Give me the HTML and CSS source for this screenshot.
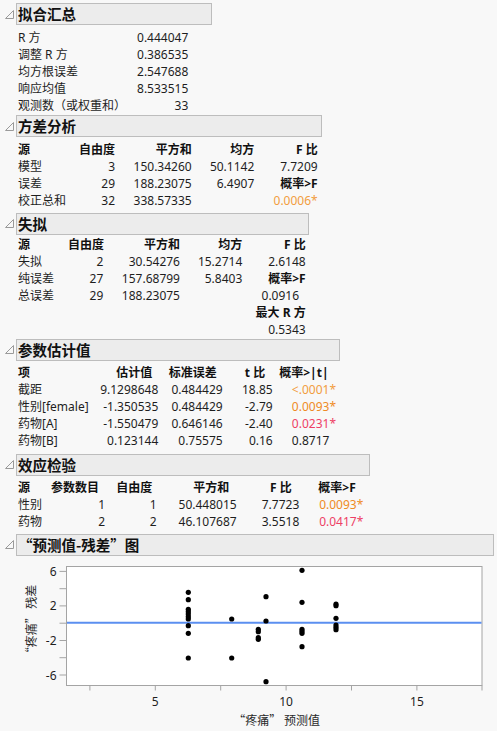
FILE: index.html
```html
<!DOCTYPE html>
<html lang="zh-CN">
<head>
<meta charset="utf-8">
<title>拟合汇总</title>
<link rel="stylesheet" href="styles.css">
</head>
<body>

<section class="section">
  <div class="head">
    <svg class="tri" viewBox="0 0 9 9"><polygon points="8.5,0.5 8.5,8.5 0.5,8.5"/></svg>
    <div class="bar w1">拟合汇总</div>
  </div>
  <table class="t t1">
    <colgroup><col class="c100"><col class="c70"></colgroup>
    <tr><td class="l">R 方</td><td>0.444047</td></tr>
    <tr><td class="l">调整 R 方</td><td>0.386535</td></tr>
    <tr><td class="l">均方根误差</td><td>2.547688</td></tr>
    <tr><td class="l">响应均值</td><td>8.533515</td></tr>
    <tr><td class="l">观测数（或权重和）</td><td>33</td></tr>
  </table>
</section>

<section class="section">
  <div class="head">
    <svg class="tri" viewBox="0 0 9 9"><polygon points="8.5,0.5 8.5,8.5 0.5,8.5"/></svg>
    <div class="bar w2">方差分析</div>
  </div>
  <table class="t t2">
    <colgroup><col class="c60"><col class="c37"><col class="c767"><col class="c626"><col class="c634"></colgroup>
    <tr><th class="l">源</th><th>自由度</th><th>平方和</th><th>均方</th><th>F 比</th></tr>
    <tr><td class="l">模型</td><td>3</td><td>150.34260</td><td>50.1142</td><td>7.7209</td></tr>
    <tr><td class="l">误差</td><td>29</td><td>188.23075</td><td>6.4907</td><th>概率&gt;F</th></tr>
    <tr><td class="l">校正总和</td><td>32</td><td>338.57335</td><td></td><td class="p-a">0.0006*</td></tr>
  </table>
</section>

<section class="section">
  <div class="head">
    <svg class="tri" viewBox="0 0 9 9"><polygon points="8.5,0.5 8.5,8.5 0.5,8.5"/></svg>
    <div class="bar w3">失拟</div>
  </div>
  <table class="t t3">
    <colgroup><col class="c50"><col class="c353"><col class="c767"><col class="c623"><col class="c634"></colgroup>
    <tr><th class="l">源</th><th>自由度</th><th>平方和</th><th>均方</th><th>F 比</th></tr>
    <tr><td class="l">失拟</td><td>2</td><td>30.54276</td><td>15.2714</td><td>2.6148</td></tr>
    <tr><td class="l">纯误差</td><td>27</td><td>157.68799</td><td>5.8403</td><th>概率&gt;F</th></tr>
    <tr><td class="l">总误差</td><td>29</td><td>188.23075</td><td></td><td>0.0916<span class="hid">*</span></td></tr>
    <tr><td></td><td></td><td></td><td></td><th>最大 R 方</th></tr>
    <tr><td></td><td></td><td></td><td></td><td>0.5343</td></tr>
  </table>
</section>

<section class="section">
  <div class="head">
    <svg class="tri" viewBox="0 0 9 9"><polygon points="8.5,0.5 8.5,8.5 0.5,8.5"/></svg>
    <div class="bar w4">参数估计值</div>
  </div>
  <table class="t t4">
    <colgroup><col class="c80"><col class="c603"><col class="c644"><col class="c50"><col class="c633"></colgroup>
    <tr><th class="l">项</th><th class="o6">估计值</th><th class="o6">标准误差</th><th class="o7">t 比</th><th class="o7">概率&gt;|t|</th></tr>
    <tr><td class="l">截距</td><td>9.1298648</td><td>0.484429</td><td>18.85</td><td class="p-a">&lt;.0001*</td></tr>
    <tr><td class="l">性别[female]</td><td>-1.350535</td><td>0.484429</td><td>-2.79</td><td class="p-b">0.0093*</td></tr>
    <tr><td class="l">药物[A]</td><td>-1.550479</td><td>0.646146</td><td>-2.40</td><td class="p-c">0.0231*</td></tr>
    <tr><td class="l">药物[B]</td><td>0.123144</td><td>0.75575</td><td>0.16</td><td>0.8717<span class="hid">*</span></td></tr>
  </table>
</section>

<section class="section">
  <div class="head">
    <svg class="tri" viewBox="0 0 9 9"><polygon points="8.5,0.5 8.5,8.5 0.5,8.5"/></svg>
    <div class="bar w5">效应检验</div>
  </div>
  <table class="t t5">
    <colgroup><col class="c30"><col class="c57"><col class="c517"><col class="c80"><col class="c626"><col class="c64"></colgroup>
    <tr><th class="l">源</th><th class="o6">参数数目</th><th class="o4">自由度</th><th class="o7">平方和</th><th class="o7">F 比</th><th class="o7">概率&gt;F</th></tr>
    <tr><td class="l">性别</td><td>1</td><td>1</td><td>50.448015</td><td>7.7723</td><td class="p-b">0.0093*</td></tr>
    <tr><td class="l">药物</td><td>2</td><td>2</td><td>46.107687</td><td>3.5518</td><td class="p-c">0.0417*</td></tr>
  </table>
</section>

<section class="section">
  <div class="head">
    <svg class="tri" viewBox="0 0 9 9"><polygon points="8.5,0.5 8.5,8.5 0.5,8.5"/></svg>
    <div class="bar w6"><span class="cjk">“预测值-残差”图</span></div>
  </div>
  <svg class="chart" width="497" height="175" viewBox="0 0 497 175">
    <rect class="frame" x="66.5" y="10.5" width="415.5" height="119"/>
    <g class="tick">
      <line x1="59.5" y1="15.4" x2="66.5" y2="15.4"/>
      <line x1="59.5" y1="32.7" x2="66.5" y2="32.7"/>
      <line x1="59.5" y1="49.9" x2="66.5" y2="49.9"/>
      <line x1="59.5" y1="67.2" x2="66.5" y2="67.2"/>
      <line x1="59.5" y1="84.5" x2="66.5" y2="84.5"/>
      <line x1="59.5" y1="101.7" x2="66.5" y2="101.7"/>
      <line x1="59.5" y1="119" x2="66.5" y2="119"/>
      <line x1="89.9" y1="129.5" x2="89.9" y2="134.5"/>
      <line x1="155.3" y1="129.5" x2="155.3" y2="134.5"/>
      <line x1="220.7" y1="129.5" x2="220.7" y2="134.5"/>
      <line x1="286.1" y1="129.5" x2="286.1" y2="134.5"/>
      <line x1="351.5" y1="129.5" x2="351.5" y2="134.5"/>
      <line x1="416.9" y1="129.5" x2="416.9" y2="134.5"/>
      <line x1="482" y1="129.5" x2="482" y2="134.5"/>
    </g>
    <g class="ylab">
      <text x="56.5" y="15.4">6</text>
      <text x="56.5" y="49.9">2</text>
      <text x="56.5" y="84.5">-2</text>
      <text x="56.5" y="119">-6</text>
    </g>
    <g class="xlab">
      <text x="155.3" y="145.7">5</text>
      <text x="286.1" y="145.7">10</text>
      <text x="416.9" y="145.7">15</text>
    </g>
    <text class="axtitle" x="276.7" y="163.3">“疼痛” 预测值</text>
    <text class="axtitle" transform="translate(30 66) rotate(-90)">“疼痛” 残差</text>
    <line class="zero" x1="67" y1="66.7" x2="481.5" y2="66.7"/>
    <g class="dots">
      <circle cx="188.3" cy="36.3" r="2.6"/>
      <circle cx="188.3" cy="43.7" r="2.6"/>
      <circle cx="188.3" cy="53.3" r="2.6"/>
      <circle cx="188.3" cy="55.7" r="2.6"/>
      <circle cx="188.3" cy="58" r="2.6"/>
      <circle cx="188.3" cy="60.7" r="2.6"/>
      <circle cx="188.3" cy="63" r="2.6"/>
      <circle cx="188.3" cy="69.7" r="2.6"/>
      <circle cx="188.3" cy="77.3" r="2.6"/>
      <circle cx="188.3" cy="102" r="2.6"/>
      <circle cx="231.7" cy="63" r="2.6"/>
      <circle cx="231.7" cy="102" r="2.6"/>
      <circle cx="258.3" cy="73.3" r="2.6"/>
      <circle cx="258.3" cy="75.7" r="2.6"/>
      <circle cx="258.3" cy="81.7" r="2.6"/>
      <circle cx="258.3" cy="83.3" r="2.6"/>
      <circle cx="266" cy="40.7" r="2.6"/>
      <circle cx="266" cy="65" r="2.6"/>
      <circle cx="266" cy="125.7" r="2.6"/>
      <circle cx="302" cy="14.3" r="2.6"/>
      <circle cx="302" cy="46.3" r="2.6"/>
      <circle cx="302" cy="73.3" r="2.6"/>
      <circle cx="302" cy="75.3" r="2.6"/>
      <circle cx="302" cy="77.3" r="2.6"/>
      <circle cx="302" cy="90.7" r="2.6"/>
      <circle cx="336" cy="48" r="2.6"/>
      <circle cx="336" cy="49.7" r="2.6"/>
      <circle cx="336" cy="62.3" r="2.6"/>
      <circle cx="336" cy="69" r="2.6"/>
      <circle cx="336" cy="71.3" r="2.6"/>
      <circle cx="336" cy="73.7" r="2.6"/>
    </g>
  </svg>
</section>

</body>
</html>
```

FILE: styles.css
```css
html, body {
  margin: 0;
  background: #f8f8f8;
}
body {
  padding-top: 3px;
  font-family: "Noto Sans", "Noto Sans CJK SC", sans-serif;
  font-size: 12px;
  color: #1e1e1e;
}

.head {
  display: flex;
  align-items: flex-start;
}
.tri {
  flex: none;
  width: 9px;
  height: 9px;
  margin: 6.5px 2px 0 5px;
}
.tri polygon {
  fill: none;
  stroke: #9a9a9a;
  stroke-width: 1;
}
.bar {
  box-sizing: content-box;
  height: 20px;
  line-height: 20px;
  padding-left: 1px;
  border: 1px solid #bdbdbd;
  background: #ececec;
  font-family: "Noto Sans CJK SC", "Noto Sans", sans-serif;
  font-weight: bold;
  font-size: 14.5px;
  color: #111;
  white-space: nowrap;
}
.w1 { width: 193px; }
.w2 { width: 303px; }
.w3 { width: 290px; }
.w4 { width: 321px; }
.w5 { width: 351px; }
.w6 { width: 475px; }
.cjk { font-family: "Noto Sans CJK SC", sans-serif; }

.t {
  border-collapse: collapse;
  table-layout: fixed;
  margin: 3.5px 0 4px 18px;
}
.t td, .t th {
  padding: 0;
  height: 17px;
  line-height: 17px;
  text-align: right;
  white-space: nowrap;
  vertical-align: middle;
}
.t th { font-weight: bold; color: #111; }
.t .l { text-align: left; }

.t1 { width: 170.3px; margin-bottom: 1.5px; }
.t2 { width: 299.7px; margin-bottom: 4.2px; }
.t3 { width: 287.7px; margin-top: 1.5px; margin-bottom: 0.8px; }
.t4 { width: 318px; margin-bottom: 4.5px; }
.t5 { width: 345.3px; margin-bottom: 3.5px; }

.c30 { width: 30px; }
.c37 { width: 37px; }
.c50 { width: 50px; }
.c57 { width: 57px; }
.c60 { width: 60px; }
.c64 { width: 64px; }
.c70 { width: 70.3px; }
.c80 { width: 80px; }
.c100 { width: 100px; }
.c353 { width: 35.3px; }
.c517 { width: 51.7px; }
.c603 { width: 60.3px; }
.c623 { width: 62.3px; }
.c626 { width: 62.6px; }
.c633 { width: 63.3px; }
.c634 { width: 63.4px; }
.c644 { width: 64.4px; }
.c767 { width: 76.7px; }

.t .o4 { padding-right: 4.5px; }
.t .o6 { padding-right: 6px; }
.t .o7 { padding-right: 7.5px; }

.hid { visibility: hidden; }
.p-a { color: #f29d40; }
.p-b { color: #ef8b25; }
.p-c { color: #ee3f65; }

.chart {
  display: block;
  font-family: "Noto Sans", "Noto Sans CJK SC", sans-serif;
  font-size: 12px;
}
.frame {
  fill: #ffffff;
  stroke: #a4a4a4;
  stroke-width: 1;
}
.tick line {
  stroke: #a4a4a4;
  stroke-width: 1;
}
.ylab text {
  text-anchor: end;
  dominant-baseline: central;
  fill: #1e1e1e;
}
.xlab text {
  text-anchor: middle;
  dominant-baseline: central;
  fill: #1e1e1e;
}
.axtitle {
  font-family: "Noto Sans CJK SC", sans-serif;
  text-anchor: middle;
  dominant-baseline: central;
  fill: #2a2a2a;
}
.zero {
  stroke: #5b8ff0;
  stroke-width: 2;
}
.dots circle { fill: #000; }
```
